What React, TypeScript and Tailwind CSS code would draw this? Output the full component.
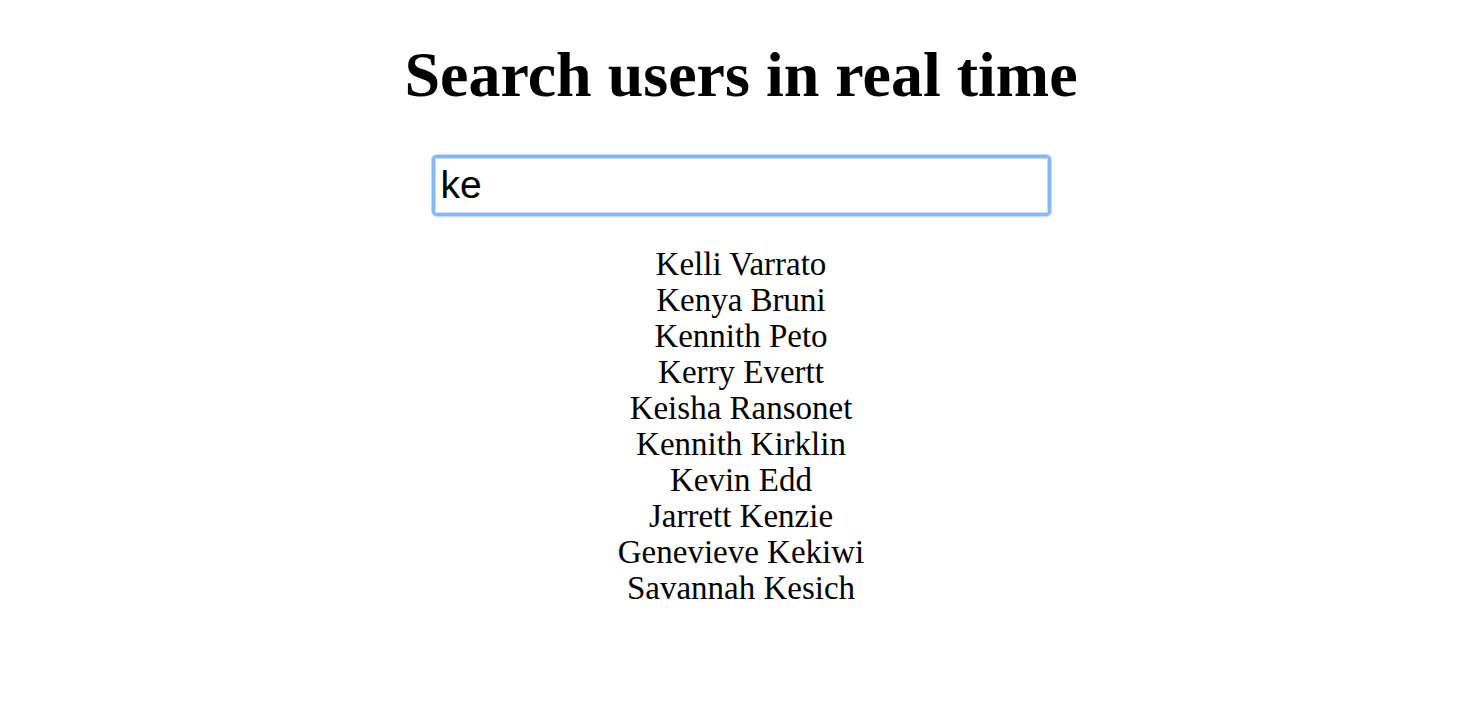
import { useState } from 'react';

const users = [
  'Kelli Varrato',
  'Kenya Bruni',
  'Kennith Peto',
  'Kerry Evertt',
  'Keisha Ransonet',
  'Kennith Kirklin',
  'Kevin Edd',
  'Jarrett Kenzie',
  'Genevieve Kekiwi',
  'Savannah Kesich',
];

export default function App() {
  const [query, setQuery] = useState('ke');

  const matches = users.filter((u) => u.toLowerCase().includes(query.toLowerCase()));

  return (
    <div className="min-h-screen bg-white text-black font-['Liberation_Serif','Times_New_Roman',serif] flex flex-col items-center pl-[20px]">
      <h1 className="mt-[39px] text-[64px] leading-[72px] font-bold">Search users in real time</h1>

      {/* focused input with glow ring */}
      <div className="mt-[44px] rounded-[5px] p-[3px] bg-[#86b8f5] shadow-[0_0_1px_1px_#b9d6fa]">
        <input
          value={query}
          onChange={(e) => setQuery(e.target.value)}
          autoFocus
          className="block w-[613px] h-[55px] border border-[#c4dcf9] bg-white px-[5px] text-[39px] font-['Liberation_Sans',Arial,sans-serif] outline-none caret-black"
        />
      </div>

      <ul className="mt-[30px] text-center text-[33px] leading-[36px]">
        {matches.map((u) => (
          <li key={u}>{u}</li>
        ))}
      </ul>
    </div>
  );
}
